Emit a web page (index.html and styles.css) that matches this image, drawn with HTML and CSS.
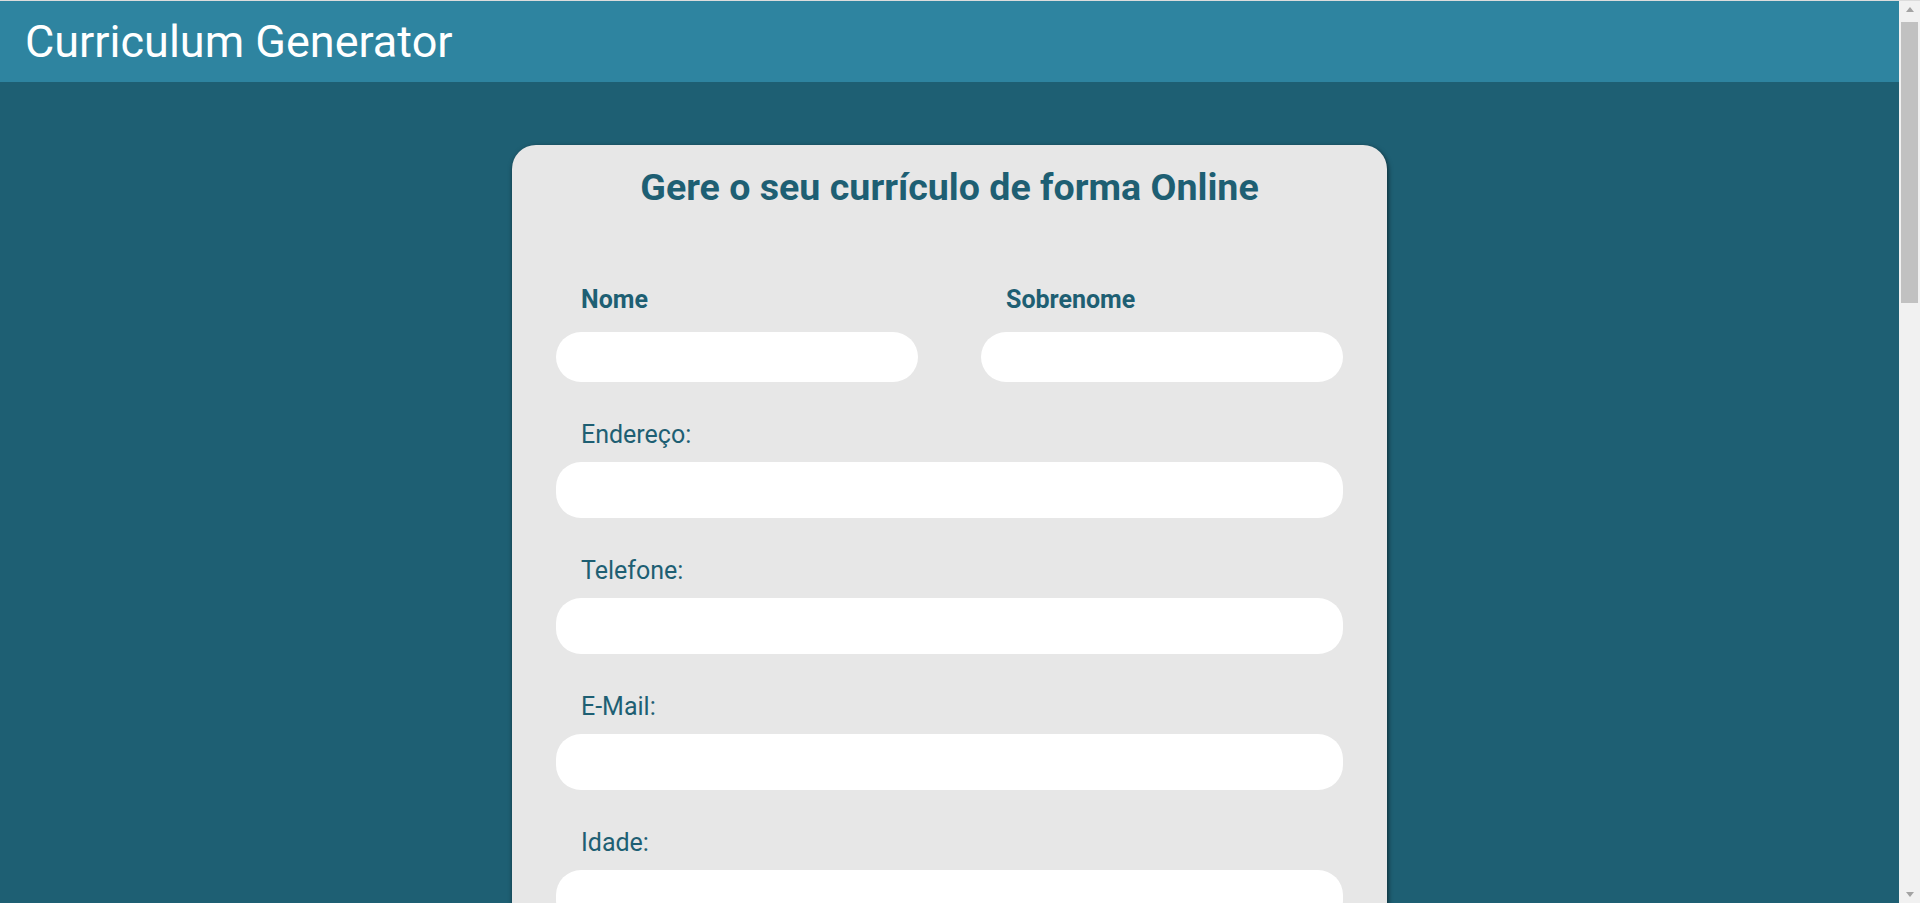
FILE: index.html
```html
<!DOCTYPE html>
<html lang="pt-BR">
<head>
<meta charset="utf-8">
<title>Curriculum Generator</title>
<link rel="stylesheet" href="styles.css">
</head>
<body>
<header class="topbar">
  <h1 class="brand">Curriculum Generator</h1>
</header>
<main class="page">
  <form class="card">
    <h2 class="card-title">Gere o seu currículo de forma Online</h2>
    <div class="name-row">
      <div class="field-first">
        <label class="label-bold" for="nome">Nome</label>
        <input class="input input-short" id="nome" type="text">
      </div>
      <div class="field-first">
        <label class="label-bold" for="sobrenome">Sobrenome</label>
        <input class="input input-short" id="sobrenome" type="text">
      </div>
    </div>
    <div class="field">
      <label class="label" for="endereco">Endereço:</label>
      <input class="input" id="endereco" type="text">
    </div>
    <div class="field">
      <label class="label" for="telefone">Telefone:</label>
      <input class="input" id="telefone" type="text">
    </div>
    <div class="field">
      <label class="label" for="email">E-Mail:</label>
      <input class="input" id="email" type="text">
    </div>
    <div class="field">
      <label class="label" for="idade">Idade:</label>
      <input class="input" id="idade" type="text">
    </div>
    <div class="field">
      <label class="label" for="cidade">Cidade:</label>
      <input class="input" id="cidade" type="text">
    </div>
    <div class="field">
      <label class="label" for="estado">Estado:</label>
      <input class="input" id="estado" type="text">
    </div>
    <div class="field">
      <label class="label" for="nacionalidade">Nacionalidade:</label>
      <input class="input" id="nacionalidade" type="text">
    </div>
    <div class="field">
      <label class="label" for="formacao">Formação Acadêmica:</label>
      <textarea class="input textarea" id="formacao"></textarea>
    </div>
    <div class="field">
      <label class="label" for="experiencia">Experiência Profissional:</label>
      <textarea class="input textarea" id="experiencia"></textarea>
    </div>
    <div class="field">
      <label class="label" for="cursos">Cursos:</label>
      <textarea class="input textarea" id="cursos"></textarea>
    </div>
    <div class="field">
      <label class="label" for="idiomas">Idiomas:</label>
      <input class="input" id="idiomas" type="text">
    </div>
    <div class="field">
      <label class="label" for="habilidades">Habilidades:</label>
      <textarea class="input textarea" id="habilidades"></textarea>
    </div>
    <div class="actions">
      <button class="submit" type="button">Gerar Currículo</button>
    </div>
  </form>
</main>
<div class="scrollbar" aria-hidden="true">
  <span class="sb-btn"><span class="sb-arrow-up"></span></span>
  <span class="sb-thumb"></span>
  <span class="sb-btn sb-btn-down"><span class="sb-arrow-down"></span></span>
</div>
</body>
</html>
```
FILE: styles.css
```css
html {
  background: #1e5f73;
  border-top: 1px solid #dcdcdc;
}
body {
  margin: 0 21px 0 0;
  background: #1e5f73;
  font-family: Roboto, "Liberation Sans", Arial, sans-serif;
  color: #1e5f73;
}
.topbar {
  height: 81px;
  background: #2e84a0;
  padding-left: 25px;
}
.brand {
  margin: 0;
  font-size: 45px;
  font-weight: 400;
  line-height: 81px;
  color: #ffffff;
}
.page {
  padding: 63px 0 60px;
}
.card {
  width: 875px;
  box-sizing: border-box;
  margin: 0 auto;
  background: #e7e7e7;
  border-radius: 24px;
  box-shadow: 1px 2px 5px rgba(0, 0, 0, 0.6);
  padding: 20px 44px 50px;
}
.card-title {
  margin: 0;
  text-align: center;
  font-size: 37.6px;
  line-height: 44px;
  font-weight: 700;
  color: #1e5f73;
}
.name-row {
  margin-top: 76px;
  display: grid;
  grid-template-columns: 1fr 1fr;
  column-gap: 63px;
}
.label-bold,
.label {
  display: block;
  font-size: 25px;
  line-height: 30px;
  padding-left: 25px;
  color: #1e5f73;
}
.label-bold {
  font-weight: 700;
  margin-bottom: 17px;
}
.label {
  font-weight: 400;
  margin-bottom: 12px;
}
.field {
  margin-top: 38px;
}
.input {
  display: block;
  width: 100%;
  box-sizing: border-box;
  height: 56px;
  border: none;
  outline: none;
  border-radius: 25px;
  background: #ffffff;
  padding: 0 24px;
  font-family: inherit;
  font-size: 20px;
  color: #333333;
}
.input-short {
  height: 50px;
}
.textarea {
  height: 150px;
  padding: 16px 24px;
  resize: none;
}
.actions {
  margin-top: 50px;
  display: flex;
  justify-content: center;
}
.submit {
  height: 60px;
  padding: 0 48px;
  border: none;
  border-radius: 30px;
  background: #2e84a0;
  color: #ffffff;
  font-family: inherit;
  font-size: 24px;
  font-weight: 700;
}

/* fake classic browser scrollbar (browser chrome overlay) */
.scrollbar {
  position: fixed;
  top: 1px;
  right: 0;
  bottom: 0;
  width: 21px;
  background: #f1f1f1;
  display: flex;
  flex-direction: column;
  align-items: center;
}
.sb-btn {
  height: 17px;
  width: 21px;
  display: flex;
  align-items: center;
  justify-content: center;
  flex: none;
}
.sb-btn-down {
  margin-top: auto;
}
.sb-arrow-up {
  width: 0;
  height: 0;
  border-left: 4.5px solid transparent;
  border-right: 4.5px solid transparent;
  border-bottom: 5px solid #a3a3a3;
}
.sb-arrow-down {
  width: 0;
  height: 0;
  border-left: 4.5px solid transparent;
  border-right: 4.5px solid transparent;
  border-top: 5px solid #a3a3a3;
}
.sb-thumb {
  margin-top: 4px;
  width: 17px;
  height: 281px;
  background: #c1c1c1;
  flex: none;
}
```
